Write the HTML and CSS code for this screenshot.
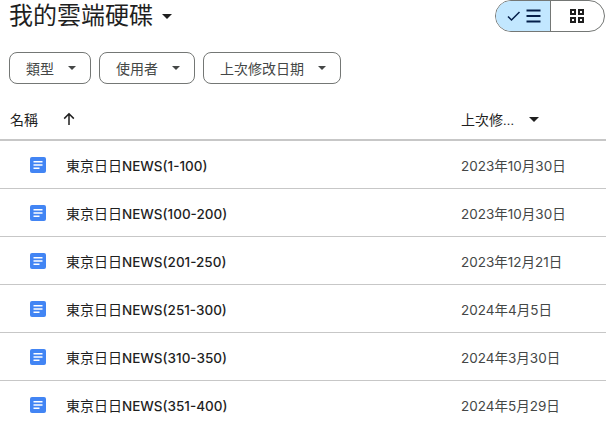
FILE: index.html
```html
<!DOCTYPE html>
<html lang="zh-Hant">
<head>
    <meta charset="UTF-8">
    <meta name="viewport" content="width=device-width, initial-scale=1.0">
    <title>我的雲端硬碟</title>
    <link rel="stylesheet" href="styles.css">
</head>
<body>
    <svg class="icon-defs" width="0" height="0">
        <symbol id="doc" viewBox="0 0 16 16">
            <rect width="16" height="16" rx="2" fill="#4285f4"/>
            <path d="M3.5 4h9v1.5h-9zM3.5 7.2h9v1.5h-9zM3.5 10.4h6v1.5h-6z" fill="#fff"/>
        </symbol>
    </svg>

    <header class="top-bar">
        <div class="title">
            <h1>我的雲端硬碟</h1>
            <span class="caret caret-title"></span>
        </div>
        <div class="view-toggle">
            <div class="toggle-part active">
                <svg width="16" height="16" viewBox="0 0 16 16"><path d="M3 8.5l3.5 3.5L14.5 4" fill="none" stroke="#041e49" stroke-width="1.5"/></svg>
                <svg width="16" height="16" viewBox="0 0 16 16"><path d="M1.5 1.6h14v1.8h-14zM1.5 7.1h14v1.8h-14zM1.5 12.6h14v1.8h-14z" fill="#041e49"/></svg>
            </div>
            <div class="toggle-part">
                <svg width="16" height="16" viewBox="0 0 16 16"><path d="M2 2h4v4H2zM10 2h4v4h-4zM2 10h4v4H2zM10 10h4v4h-4z" fill="none" stroke="#1f1f1f" stroke-width="2"/></svg>
            </div>
        </div>
    </header>

    <div class="filters">
        <button class="chip">類型<span class="caret"></span></button>
        <button class="chip">使用者<span class="caret"></span></button>
        <button class="chip">上次修改日期<span class="caret"></span></button>
    </div>

    <div class="list-head">
        <div class="col-name">
            <span>名稱</span>
            <svg width="16" height="16" viewBox="0 0 16 16"><path d="M8 14V3M3.2 7.6L8 2.8l4.8 4.8" fill="none" stroke="#1f1f1f" stroke-width="1.5"/></svg>
        </div>
        <div class="col-date">
            <span>上次修...</span>
            <span class="caret caret-dark"></span>
        </div>
    </div>

    <div class="row">
        <div class="col-name"><svg class="doc" width="16" height="16"><use href="#doc"/></svg><span class="file-name">東京日日<b>NEWS(1-100)</b></span></div>
        <div class="col-date">2023年10月30日</div>
    </div>
    <div class="row">
        <div class="col-name"><svg class="doc" width="16" height="16"><use href="#doc"/></svg><span class="file-name">東京日日<b>NEWS(100-200)</b></span></div>
        <div class="col-date">2023年10月30日</div>
    </div>
    <div class="row">
        <div class="col-name"><svg class="doc" width="16" height="16"><use href="#doc"/></svg><span class="file-name">東京日日<b>NEWS(201-250)</b></span></div>
        <div class="col-date">2023年12月21日</div>
    </div>
    <div class="row">
        <div class="col-name"><svg class="doc" width="16" height="16"><use href="#doc"/></svg><span class="file-name">東京日日<b>NEWS(251-300)</b></span></div>
        <div class="col-date">2024年4月5日</div>
    </div>
    <div class="row">
        <div class="col-name"><svg class="doc" width="16" height="16"><use href="#doc"/></svg><span class="file-name">東京日日<b>NEWS(310-350)</b></span></div>
        <div class="col-date">2024年3月30日</div>
    </div>
    <div class="row">
        <div class="col-name"><svg class="doc" width="16" height="16"><use href="#doc"/></svg><span class="file-name">東京日日<b>NEWS(351-400)</b></span></div>
        <div class="col-date">2024年5月29日</div>
    </div>
</body>
</html>
```

FILE: styles.css
```css
html, body {
    height: 100%;
    overflow: hidden;
}
body {
    margin: 0;
    font-family: 'Roboto', 'Noto Sans CJK TC', sans-serif;
    color: #1f1f1f;
    background: #fff;
}
.icon-defs {
    display: block;
    height: 0;
}
.top-bar {
    display: flex;
    justify-content: space-between;
    padding-left: 9px;
    height: 52px;
}
.title {
    display: flex;
    align-items: center;
    height: 32px;
}
h1 {
    margin: 0;
    font-size: 24px;
    font-weight: 400;
    line-height: 32px;
}
.caret {
    display: inline-block;
    width: 0;
    height: 0;
    border-left: 4px solid transparent;
    border-right: 4px solid transparent;
    border-top: 4px solid #444746;
}
.caret-title {
    margin-left: 9px;
    border-left-width: 5px;
    border-right-width: 5px;
    border-top: 5px solid #1f1f1f;
}
.caret-dark {
    border-left-width: 5px;
    border-right-width: 5px;
    border-top: 5px solid #1f1f1f;
}
.view-toggle {
    display: flex;
    width: 110px;
    height: 32px;
    margin-right: 1px;
    box-sizing: border-box;
    border: 1px solid #747775;
    border-radius: 16px;
    overflow: hidden;
}
.toggle-part {
    flex: 1;
    display: flex;
    align-items: center;
    justify-content: center;
    gap: 4px;
}
.toggle-part.active {
    background: #c2e7ff;
    border-right: 1px solid #747775;
}
.filters {
    display: flex;
    gap: 8px;
    padding-left: 9px;
    height: 55px;
}
.chip {
    display: flex;
    align-items: center;
    justify-content: space-between;
    height: 32px;
    box-sizing: border-box;
    padding: 0 14px 0 16px;
    background: #fff;
    border: 1px solid #747775;
    border-radius: 8px;
    font-family: inherit;
    font-size: 14px;
    color: #444746;
}
.chip .caret {
    margin-left: 14px;
}
.list-head {
    display: flex;
    align-items: center;
    height: 24px;
    padding-bottom: 8px;
    border-bottom: 2px solid #c7c7c7;
    font-size: 14px;
}
.list-head .col-name {
    display: flex;
    align-items: center;
    gap: 23px;
    padding-left: 10px;
}
.list-head .col-date {
    display: flex;
    align-items: center;
    gap: 15px;
}
.col-name {
    width: 461px;
    box-sizing: border-box;
}
.row {
    display: flex;
    align-items: center;
    height: 47px;
    border-bottom: 1px solid #c7c7c7;
    font-size: 14px;
}
.row .col-name {
    display: flex;
    align-items: center;
    padding-left: 30px;
    gap: 20px;
}
.file-name b {
    font-family: 'Inter', sans-serif;
    font-weight: 500;
    font-size: 13.5px;
}
.row .col-date {
    font-family: 'Inter', 'Noto Sans CJK TC', sans-serif;
    font-size: 13.5px;
    color: #444746;
}
```
